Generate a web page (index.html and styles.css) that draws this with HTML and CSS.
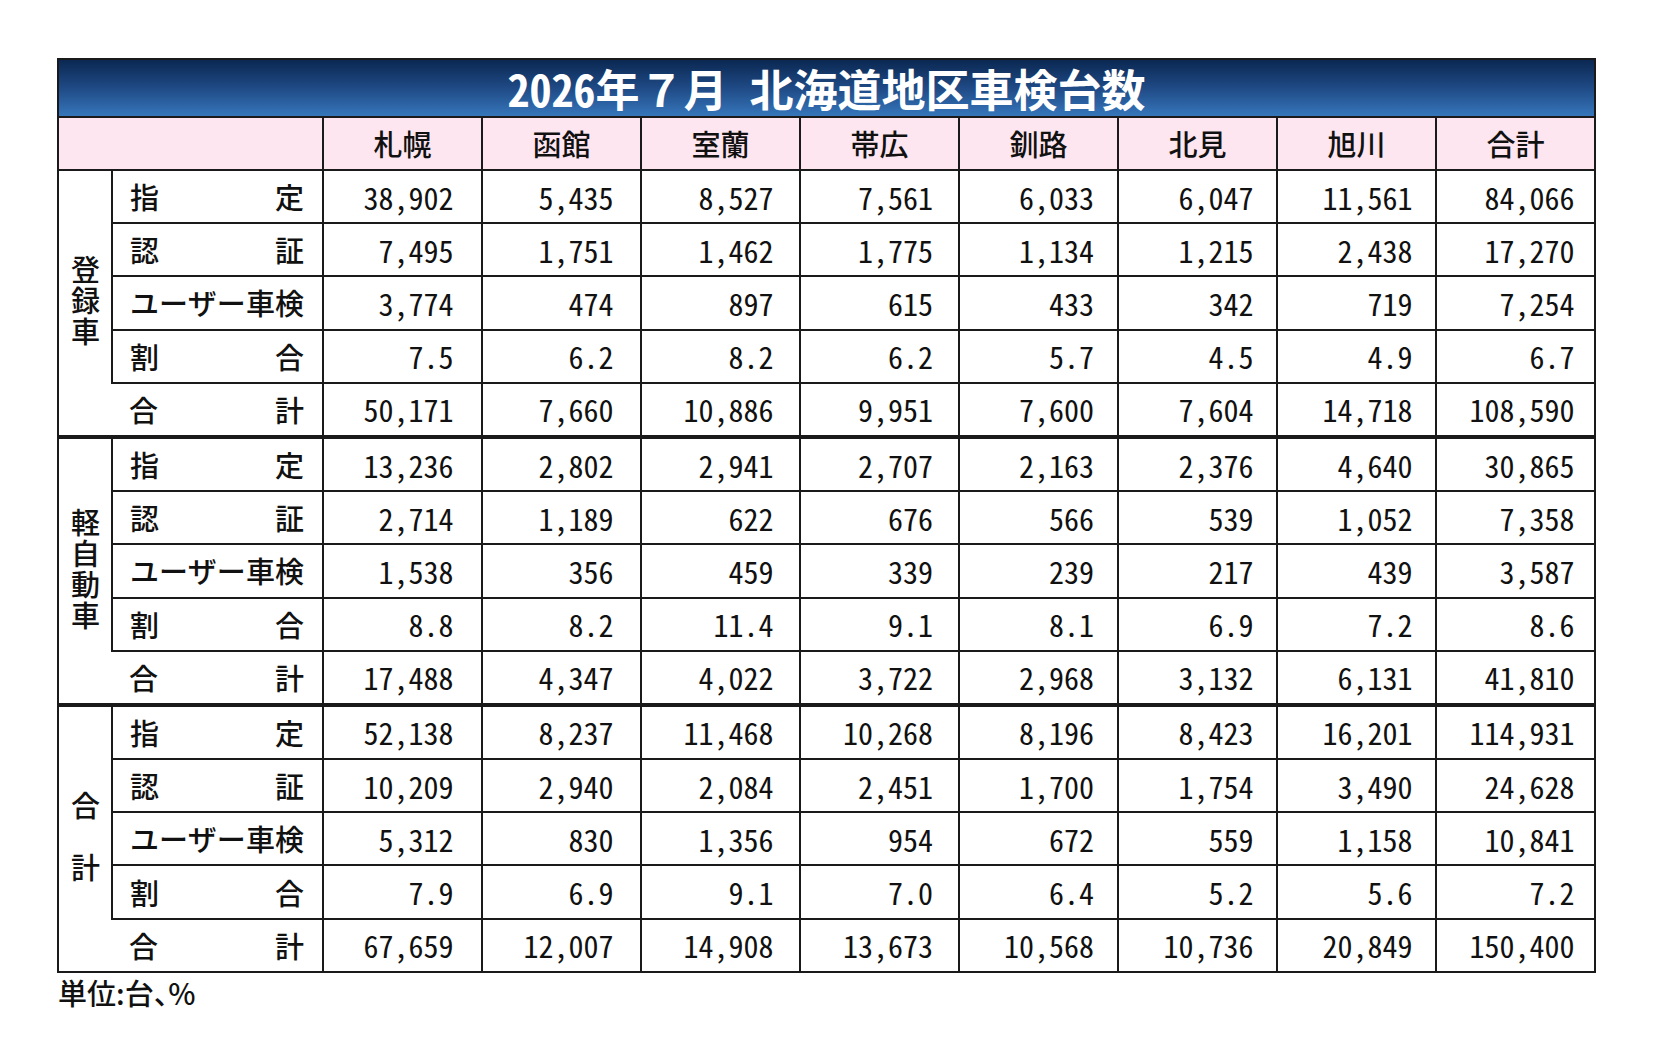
FILE: index.html
```html
<!DOCTYPE html>
<html lang="ja">
<head>
<meta charset="utf-8">
<title>2026年７月 北海道地区車検台数</title>
<link rel="stylesheet" href="styles.css">
</head>
<body>
<div class="page">
<table class="stats">
  <colgroup>
    <col class="c-group"><col class="c-label">
    <col class="c-num"><col class="c-num"><col class="c-num"><col class="c-num">
    <col class="c-num"><col class="c-num"><col class="c-num"><col class="c-num">
  </colgroup>
  <tr class="title"><td colspan="10"><span class="yr">2026</span>年７月&ensp;北海道地区車検台数</td></tr>
  <tr class="head">
    <th colspan="2"></th>
    <th>札幌</th><th>函館</th><th>室蘭</th><th>帯広</th><th>釧路</th><th>北見</th><th>旭川</th><th>合計</th>
  </tr>

  <tr class="row">
    <td class="group" rowspan="5"><span class="vtext">登録車</span></td>
    <td class="label"><span>指</span><span>定</span></td>
    <td>38,902</td><td>5,435</td><td>8,527</td><td>7,561</td><td>6,033</td><td>6,047</td><td>11,561</td><td>84,066</td>
  </tr>
  <tr class="row">
    <td class="label"><span>認</span><span>証</span></td>
    <td>7,495</td><td>1,751</td><td>1,462</td><td>1,775</td><td>1,134</td><td>1,215</td><td>2,438</td><td>17,270</td>
  </tr>
  <tr class="row">
    <td class="label"><span>ユーザー車検</span></td>
    <td>3,774</td><td>474</td><td>897</td><td>615</td><td>433</td><td>342</td><td>719</td><td>7,254</td>
  </tr>
  <tr class="row">
    <td class="label"><span>割</span><span>合</span></td>
    <td>7.5</td><td>6.2</td><td>8.2</td><td>6.2</td><td>5.7</td><td>4.5</td><td>4.9</td><td>6.7</td>
  </tr>
  <tr class="row">
    <td class="label total"><span>合</span><span>計</span></td>
    <td>50,171</td><td>7,660</td><td>10,886</td><td>9,951</td><td>7,600</td><td>7,604</td><td>14,718</td><td>108,590</td>
  </tr>

  <tr class="row first">
    <td class="group" rowspan="5"><span class="vtext">軽自動車</span></td>
    <td class="label"><span>指</span><span>定</span></td>
    <td>13,236</td><td>2,802</td><td>2,941</td><td>2,707</td><td>2,163</td><td>2,376</td><td>4,640</td><td>30,865</td>
  </tr>
  <tr class="row">
    <td class="label"><span>認</span><span>証</span></td>
    <td>2,714</td><td>1,189</td><td>622</td><td>676</td><td>566</td><td>539</td><td>1,052</td><td>7,358</td>
  </tr>
  <tr class="row">
    <td class="label"><span>ユーザー車検</span></td>
    <td>1,538</td><td>356</td><td>459</td><td>339</td><td>239</td><td>217</td><td>439</td><td>3,587</td>
  </tr>
  <tr class="row">
    <td class="label"><span>割</span><span>合</span></td>
    <td>8.8</td><td>8.2</td><td>11.4</td><td>9.1</td><td>8.1</td><td>6.9</td><td>7.2</td><td>8.6</td>
  </tr>
  <tr class="row">
    <td class="label total"><span>合</span><span>計</span></td>
    <td>17,488</td><td>4,347</td><td>4,022</td><td>3,722</td><td>2,968</td><td>3,132</td><td>6,131</td><td>41,810</td>
  </tr>

  <tr class="row first">
    <td class="group" rowspan="5"><span class="vtext">合　計</span></td>
    <td class="label"><span>指</span><span>定</span></td>
    <td>52,138</td><td>8,237</td><td>11,468</td><td>10,268</td><td>8,196</td><td>8,423</td><td>16,201</td><td>114,931</td>
  </tr>
  <tr class="row">
    <td class="label"><span>認</span><span>証</span></td>
    <td>10,209</td><td>2,940</td><td>2,084</td><td>2,451</td><td>1,700</td><td>1,754</td><td>3,490</td><td>24,628</td>
  </tr>
  <tr class="row">
    <td class="label"><span>ユーザー車検</span></td>
    <td>5,312</td><td>830</td><td>1,356</td><td>954</td><td>672</td><td>559</td><td>1,158</td><td>10,841</td>
  </tr>
  <tr class="row">
    <td class="label"><span>割</span><span>合</span></td>
    <td>7.9</td><td>6.9</td><td>9.1</td><td>7.0</td><td>6.4</td><td>5.2</td><td>5.6</td><td>7.2</td>
  </tr>
  <tr class="row">
    <td class="label total"><span>合</span><span>計</span></td>
    <td>67,659</td><td>12,007</td><td>14,908</td><td>13,673</td><td>10,568</td><td>10,736</td><td>20,849</td><td>150,400</td>
  </tr>
</table>
<p class="unit">単位:台、%</p>
</div>
</body>
</html>
```

FILE: styles.css
```css
html, body {
  margin: 0;
  padding: 0;
  background: #ffffff;
}

body {
  font-family: "Noto Sans CJK JP", "Noto Sans", sans-serif;
  font-weight: 500;
  color: #111111;
}

.page {
  padding: 58px 0 0 57px;
}

.stats {
  border-collapse: collapse;
  table-layout: fixed;
  width: 1538px;
}

.c-group { width: 54px; }
.c-label { width: 211px; }
.c-num { width: 159px; }

.stats td,
.stats th {
  border: 2px solid #1a1a1a;
  padding: 0;
}

.title td {
  height: 56px;
  background: linear-gradient(to bottom, #0b2852 0%, #1f4a85 50%, #3676bb 100%);
  color: #ffffff;
  font-size: 44px;
  font-weight: 700;
  line-height: 56px;
  text-align: center;
  white-space: nowrap;
}

.title .yr {
  font-feature-settings: "hwid" 1;
}

.head th {
  height: 51px;
  background: #fde6ef;
  font-size: 29px;
  font-weight: 500;
  line-height: 1;
  text-align: center;
}

.row td {
  height: 51.2px;
  font-size: 30px;
  font-weight: 400;
  line-height: 1;
  text-align: right;
  font-feature-settings: "hwid" 1;
  white-space: nowrap;
}

.row td:nth-last-child(8) { padding-right: 27.5px; }
.row td:nth-last-child(7) { padding-right: 26.5px; }
.row td:nth-last-child(6) { padding-right: 25.5px; }
.row td:nth-last-child(5) { padding-right: 25px; }
.row td:nth-last-child(4) { padding-right: 23px; }
.row td:nth-last-child(3) { padding-right: 22.5px; }
.row td:nth-last-child(2) { padding-right: 22.5px; }
.row td:nth-last-child(1) { padding-right: 19.5px; }

.row.first td {
  border-top: 4px solid #1a1a1a;
}

.stats td.group {
  font-size: 29px;
  font-weight: 500;
  text-align: center;
  font-feature-settings: normal;
  padding: 0;
  border-right: none;
}

.vtext {
  display: inline-block;
  writing-mode: vertical-rl;
  letter-spacing: 2px;
  line-height: 1;
}

.stats td.label {
  font-size: 29px;
  font-weight: 500;
  font-feature-settings: normal;
  text-align: left;
  padding: 0 18px 0 17px;
}

.label span:first-child {
  float: left;
}

.label span:last-child {
  float: right;
}

.label span:only-child {
  float: none;
  display: block;
  text-align: justify;
  text-align-last: justify;
}

.stats td.label.total {
  border-left: none;
}

.unit {
  margin: 2px 0 0 1px;
  font-size: 29px;
  line-height: 34px;
  font-feature-settings: "halt" 1;
}
```
